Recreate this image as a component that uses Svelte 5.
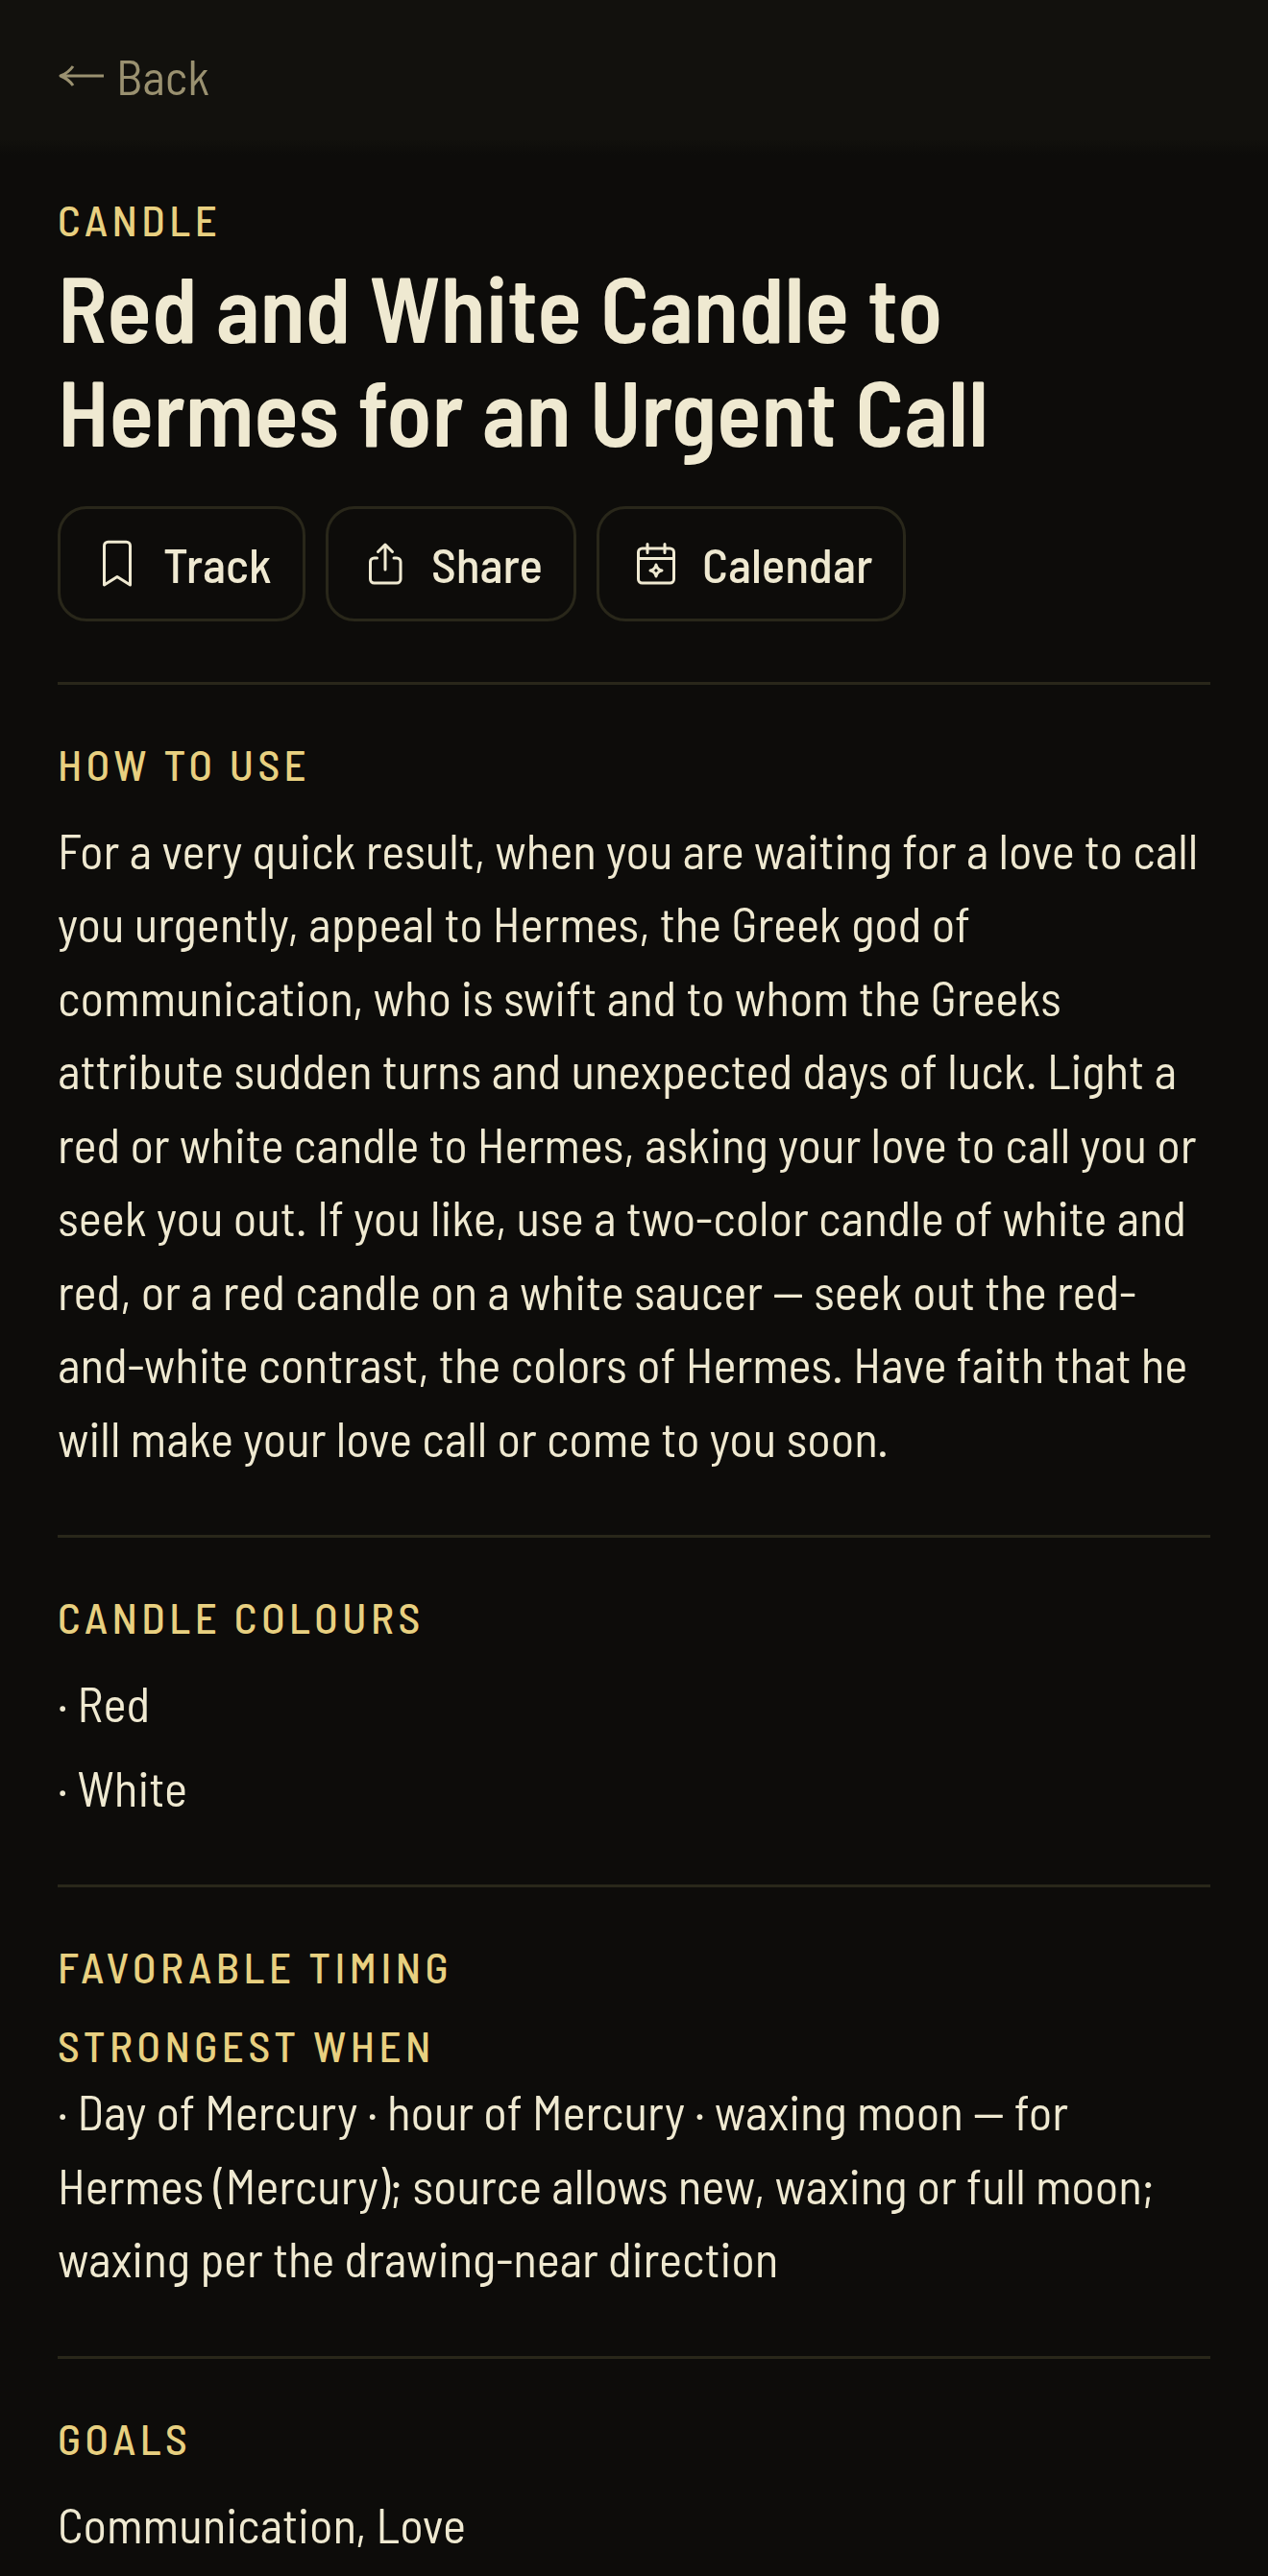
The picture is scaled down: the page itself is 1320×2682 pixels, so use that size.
<script>
  const colours = ['Red', 'White'];
</script>

<div class="page">
  <header>
    <a class="back" href="#back">
      <svg viewBox="0 0 50 28" aria-hidden="true">
        <path d="M3 14H48M16 4Q11 11 3 14Q11 17 16 24" />
      </svg>
      Back
    </a>
  </header>

  <main>
    <div class="intro">
      <p class="label">Candle</p>
      <h1>Red and White Candle to Hermes for an Urgent Call</h1>
      <div class="actions">
        <button type="button">
          <svg viewBox="0 0 54 54" aria-hidden="true">
            <path d="M13.5 49V8.2a4 4 0 0 1 4-4h19a4 4 0 0 1 4 4V49L27 40.5Z" />
          </svg>
          Track
        </button>
        <button type="button">
          <svg viewBox="0 0 54 54" aria-hidden="true">
            <path d="M27 33V7M19.5 14.5 27 7l7.5 7.5M18.5 21H15.5a4 4 0 0 0-4 4V43a4 4 0 0 0 4 4H39a4 4 0 0 0 4-4V25a4 4 0 0 0-4-4H36" />
          </svg>
          Share
        </button>
        <button type="button">
          <svg viewBox="0 0 54 54" aria-hidden="true">
            <rect x="8.5" y="11" width="37" height="36" rx="4" />
            <path d="M8.5 21.5H45.5M18 6.5V15.5M36 6.5V15.5M27 28Q28 33 33 34Q28 35 27 40Q26 35 21 34Q26 33 27 28Z" />
          </svg>
          Calendar
        </button>
      </div>
    </div>

    <section>
      <h2 class="label">How to use</h2>
      <p>
        For a very quick result, when you are waiting for a love to call you urgently, appeal to
        Hermes, the Greek god of communication, who is swift and to whom the Greeks attribute sudden
        turns and unexpected days of luck. Light a red or white candle to Hermes, asking your love to
        call you or seek you out. If you like, use a two-color candle of white and red, or a red
        candle on a white saucer — seek out the red-and-white contrast, the colors of Hermes. Have
        faith that he will make your love call or come to you soon.
      </p>
    </section>

    <section>
      <h2 class="label">Candle colours</h2>
      <ul>
        {#each colours as colour}
          <li>· {colour}</li>
        {/each}
      </ul>
    </section>

    <section>
      <h2 class="label">Favorable timing</h2>
      <div class="timing">
        <h3 class="label">Strongest when</h3>
        <p>
          · Day of Mercury · hour of Mercury · waxing moon — for Hermes (Mercury); source allows new,
          waxing or full moon; waxing per the drawing-near direction
        </p>
      </div>
    </section>

    <section>
      <h2 class="label">Goals</h2>
      <p>Communication, Love</p>
    </section>
  </main>
</div>

<style>
  :global(body) {
    background: #0d0c0a;
  }

  .page {
    overflow: hidden;
    color: #efe9d1;
    background: #0d0c0a;
    font-family: 'Barlow Semi Condensed', 'Roboto Condensed', Roboto, sans-serif;
    font-size: 51px;
    line-height: 1.5;
  }

  header {
    padding: 41px 60px 43px;
    background: linear-gradient(to top, #0d0c0a, #12110d 16px);
  }

  .back {
    display: inline-flex;
    align-items: center;
    gap: 11px;
    color: #9a9170;
    text-decoration: none;
    vertical-align: top;
  }

  svg {
    flex: none;
    fill: none;
    stroke: currentColor;
    stroke-width: 3;
    stroke-linecap: round;
    stroke-linejoin: round;
  }

  .back svg {
    width: 50px;
    height: 28px;
    stroke-linecap: butt;
  }

  main {
    padding: 40px 60px 0;
  }

  h1,
  h2,
  h3,
  p,
  ul {
    margin: 0;
    padding: 0;
  }

  .label {
    color: #e8d080;
    font-size: 45px;
    font-weight: 500;
    line-height: 54px;
    letter-spacing: 0.1em;
    text-transform: uppercase;
  }

  h1 {
    margin-top: 10px;
    font-size: 96px;
    font-weight: 600;
    line-height: 108px;
  }

  .intro {
    padding-bottom: 63px;
  }

  .actions {
    display: flex;
    flex-wrap: wrap;
    gap: 21px;
    margin-top: 46px;
  }

  button {
    display: flex;
    align-items: center;
    gap: 21px;
    padding: 24px 32px;
    border: 3px solid #29271a;
    border-radius: 30px;
    background: none;
    color: inherit;
    font: inherit;
    font-weight: 500;
    line-height: 66px;
  }

  button svg {
    width: 54px;
    height: 54px;
  }

  section {
    display: flex;
    flex-direction: column;
    gap: 25px;
    padding: 55px 0 63px;
    border-top: 3px solid #29271a;
  }

  section:last-child {
    padding-bottom: 4px;
  }

  ul {
    display: flex;
    flex-direction: column;
    gap: 11px;
    list-style: none;
  }

  .timing {
    display: flex;
    flex-direction: column;
    gap: 4px;
    padding-top: 3px;
  }
</style>
